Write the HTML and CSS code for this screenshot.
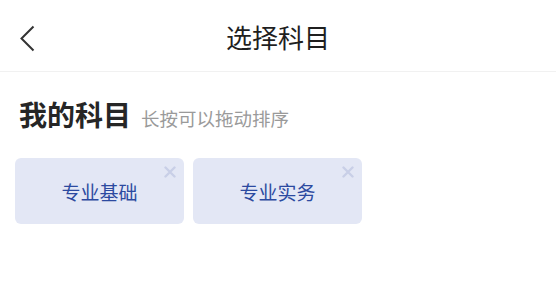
FILE: index.html
```html
<!DOCTYPE html>
<html lang="zh">
<head>
<meta charset="utf-8">
<link rel="stylesheet" href="styles.css">
</head>
<body>
<header class="nav">
  <span class="back">
    <svg width="17" height="27" viewBox="0 0 17 27"><path d="M14.5 1.5 L2.5 13.5 L14.5 25.5" fill="none" stroke="#333" stroke-width="2"/></svg>
  </span>
  <h1 class="nav-title">选择科目</h1>
</header>
<main class="content">
  <div class="section-head">
    <span class="section-title">我的科目</span>
    <span class="section-hint">长按可以拖动排序</span>
  </div>
  <div class="cards">
    <div class="card">专业基础
      <svg class="close" width="12" height="12" viewBox="0 0 12 12"><path d="M1.5 1.5 L10.5 10.5 M10.5 1.5 L1.5 10.5" stroke="#c9cfe7" stroke-width="2.4" stroke-linecap="round"/></svg>
    </div>
    <div class="card">专业实务
      <svg class="close" width="12" height="12" viewBox="0 0 12 12"><path d="M1.5 1.5 L10.5 10.5 M10.5 1.5 L1.5 10.5" stroke="#c9cfe7" stroke-width="2.4" stroke-linecap="round"/></svg>
    </div>
  </div>
</main>
</body>
</html>
```
FILE: styles.css
```css
* { box-sizing: border-box; }
html, body { margin: 0; padding: 0; background: #fff; }
body {
  font-family: "Noto Sans CJK SC", "Noto Sans", sans-serif;
  width: 556px;
  height: 304px;
  overflow: hidden;
}
.nav {
  position: relative;
  height: 72px;
  border-bottom: 1px solid #f1f1f1;
  display: flex;
  align-items: center;
  justify-content: center;
}
.back {
  position: absolute;
  left: 19px;
  top: 25px;
  display: flex;
}
.nav-title {
  margin: 0;
  font-size: 26px;
  font-weight: 400;
  color: #1f1f1f;
  line-height: 1;
  padding-top: 2px;
}
.content { padding: 0 15px; }
.section-head {
  margin-top: 24px;
  padding-left: 4px;
  display: flex;
  align-items: baseline;
  gap: 10px;
  height: 36px;
}
.section-title {
  font-size: 28px;
  font-weight: 700;
  color: #262626;
  line-height: 36px;
}
.section-hint {
  font-size: 18.5px;
  color: #9a9a9a;
}
.cards {
  margin-top: 26px;
  display: flex;
  gap: 9px;
}
.card {
  position: relative;
  width: 169px;
  height: 66px;
  border-radius: 6px;
  background: #e3e7f5;
  color: #2c4aa0;
  font-size: 19px;
  display: flex;
  align-items: center;
  justify-content: center;
}
.close {
  position: absolute;
  top: 8px;
  right: 8px;
}
```
